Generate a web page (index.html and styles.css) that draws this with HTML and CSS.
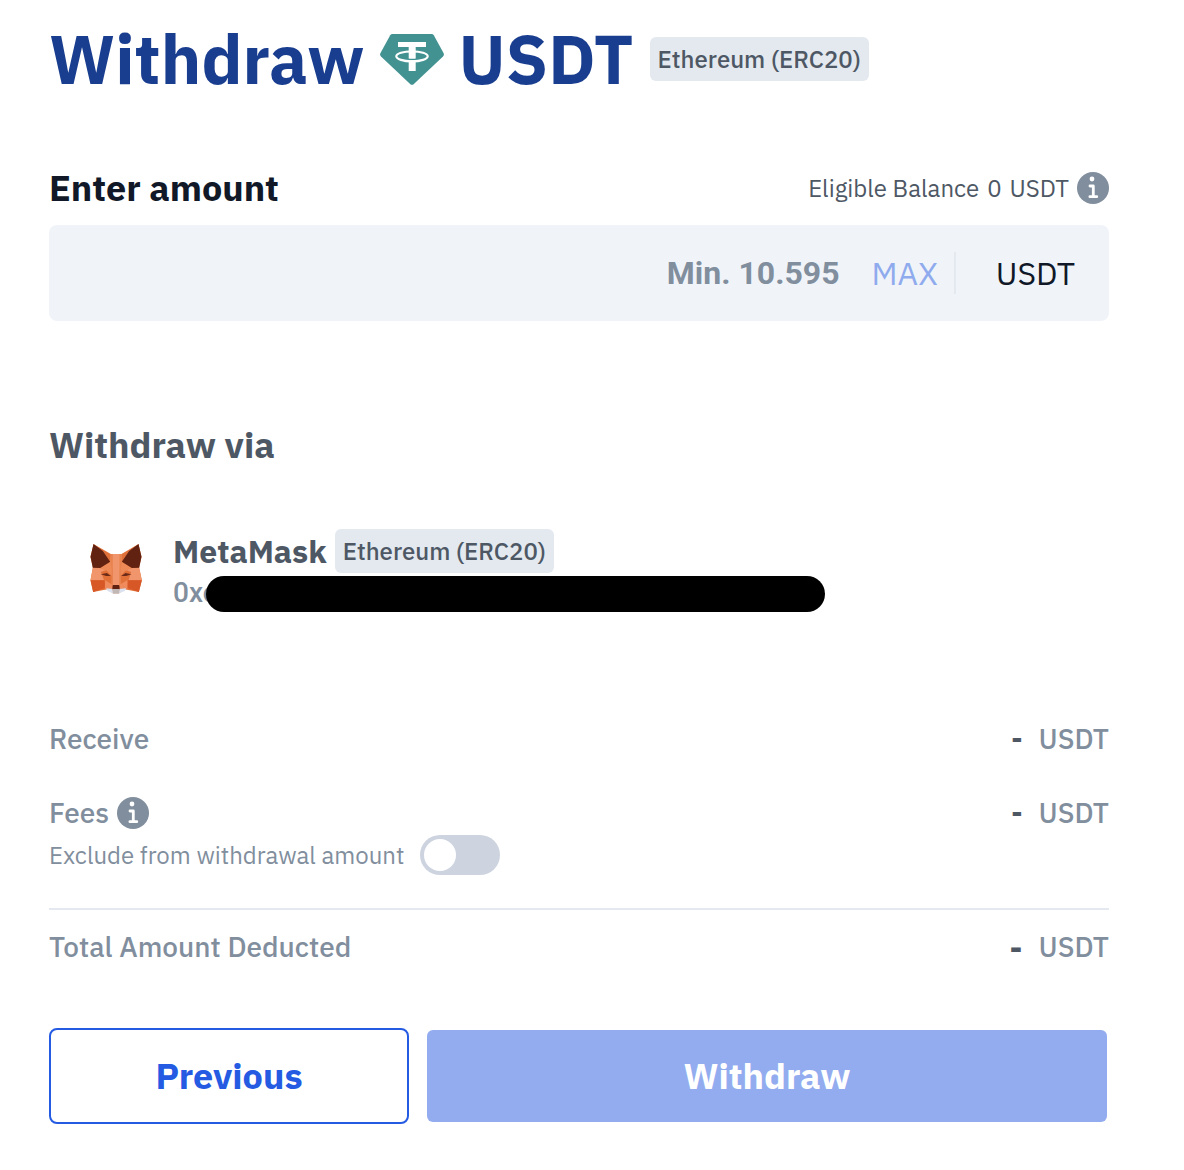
FILE: index.html
```html
<!DOCTYPE html>
<html lang="en">
<head>
<meta charset="utf-8">
<meta name="viewport" content="width=device-width, initial-scale=1">
<title>Withdraw USDT</title>
<link rel="stylesheet" href="styles.css">
</head>
<body>
<svg class="sprite" aria-hidden="true">
  <symbol id="info" viewBox="0 0 32 32">
    <circle cx="16" cy="16" r="16" fill="#818e9d"/>
    <circle cx="15" cy="7" r="2.4" fill="#fff"/>
    <path d="M13 14H16.3V24.7M12.9 24.7H19.8" fill="none" stroke="#fff" stroke-width="2.8" stroke-linecap="round" stroke-linejoin="round"/>
  </symbol>
</svg>
<main class="page">
  <header class="title-row">
    <h1 class="title">
      <span>Withdraw</span>
      <svg class="tether" viewBox="0 0 64 51" aria-hidden="true">
        <path d="M12.5 0H51.5Q53 0 53.8 1.2L63.5 19Q64.5 21 63 22.6L33.6 50.2Q32 51.5 30.4 50.2L1 22.6Q-.5 21 .5 19L10.2 1.2Q11 0 12.5 0Z" fill="#429292"/>
        <path d="M18 8H46V13H35.700V37H28.700V13H18Z" fill="#fff"/>
        <path d="M28 24.600Q32 25 36.500 24.600V26.200H28Z" fill="#429292"/>
        <ellipse cx="32" cy="22.300" rx="15.700" ry="5" fill="none" stroke="#fff" stroke-width="2.200"/>
      </svg>
      <span>USDT</span>
    </h1>
    <span class="tag">Ethereum (ERC20)</span>
  </header>

  <form class="form">
    <div class="amount-head">
      <label class="heading heading-dark" for="amount">Enter amount</label>
      <p class="balance"><span>Eligible Balance</span><span>0</span><span>USDT</span><svg class="info" role="img" aria-label="Balance information"><use href="#info"/></svg></p>
    </div>
    <div class="field">
      <input class="amount" id="amount" type="text" inputmode="decimal" placeholder="Min. 10.595">
      <button class="max" type="button">MAX</button>
      <span class="unit">USDT</span>
    </div>

    <h2 class="heading via">Withdraw via</h2>
    <section class="wallet">
      <svg class="fox" viewBox="30 42 155 150" aria-hidden="true">
        <path d="M40 42L92 72H124L175 42L184 80L177 113L185 151L176 186L133 178L117 190H98L82 178L39 186L31 151L38 113L31 80Z" fill="#e27139"/>
        <path d="M38 113L60 114L78 120L62 126L72 151H31ZM177 113L155 114L137 120L153 126L145 151H185Z" fill="#f0956c"/>
        <path d="M60 114L90 95L97 118L95 138L80 122ZM155 114L125 95L119 118L121 138L136 122Z" fill="#ee8a58"/>
        <path d="M92 72L90 95L97 118V165H119V118L125 95L124 72Z" fill="#f0956c"/>
        <path d="M92 72H98V165H93L95 118L90 95ZM118 72H124L126 95L121 118L123 165H118Z" fill="#e8834f"/>
        <path d="M40 42L68 63L90 95L60 114L38 113L31 80ZM175 42L147 63L125 95L155 114L177 113L184 80Z" fill="#622211"/>
        <path d="M31 151H73L75 174L39 186ZM185 151H144L141 174L176 186Z" fill="#d85727"/>
        <path d="M75 151L98 165L97 174L74 176ZM141 151L117 165L118 174L142 176Z" fill="#f08b5d"/>
        <path d="M62 133L80 129L92 138H78ZM154 133L136 129L123 138H138Z" fill="#6c2a18"/>
        <path d="M98 165H117L119 178H96Z" fill="#622211"/>
        <path d="M78 175L97 176L99 190L82 183ZM138 175L118 176L116 190L134 183Z" fill="#dbe1ef"/>
        <path d="M98 177H117V191H98Z" fill="#c1b8b5"/>
      </svg>
      <div class="wallet-info">
        <div class="wallet-name"><strong>MetaMask</strong><span class="tag">Ethereum (ERC20)</span></div>
        <div class="address">0xc<span class="mask"></span></div>
      </div>
    </section>

    <dl class="summary">
      <div class="line"><dt>Receive</dt><dd><b>-</b>USDT</dd></div>
      <div class="line"><dt>Fees<svg class="info" role="img" aria-label="Fee information"><use href="#info"/></svg></dt><dd><b>-</b>USDT</dd></div>
    </dl>
    <label class="exclude">Exclude from withdrawal amount<input class="switch" type="checkbox" role="switch"></label>
    <dl class="summary total">
      <div class="line"><dt>Total Amount Deducted</dt><dd><b>-</b>USDT</dd></div>
    </dl>
    <div class="actions">
      <button class="button previous" type="button">Previous</button>
      <button class="button withdraw" type="submit">Withdraw</button>
    </div>
  </form>
</main>
</body>
</html>
```
FILE: styles.css
```css
*, *::before, *::after { box-sizing: border-box; }
body {
  margin: 0;
  background: #fff;
  color: #4e5865;
  font-family: "IBM Plex Sans", Roboto, "Liberation Sans", sans-serif;
  font-size: 24px;
  line-height: 32px;
}
h1, h2, p, dl, dd { margin: 0; }
button, input { font: inherit; margin: 0; }
.sprite { position: absolute; width: 0; height: 0; }
.page { padding: 24px 75px 46px 49px; }

.title-row { display: flex; align-items: center; gap: 16px; }
.title {
  display: flex;
  align-items: center;
  gap: 15px;
  color: #193d8f;
  font-size: 68px;
  line-height: 70px;
  font-weight: 700;
}
.tether { width: 64px; height: 51px; }
.tag {
  padding: 6px 8px;
  border-radius: 6px;
  background: #e4e9f0;
  color: #4e5865;
  font-size: 24px;
  line-height: 32px;
  font-weight: 500;
  white-space: nowrap;
}

.amount-head {
  display: flex;
  justify-content: space-between;
  align-items: center;
  margin-top: 70px;
}
.heading { font-size: 36px; line-height: 48px; font-weight: 700; }
.heading-dark { color: #111827; }
.balance { display: flex; align-items: center; gap: 8px; }
.info { flex: none; width: 32px; height: 32px; }
.field {
  display: flex;
  align-items: center;
  height: 96px;
  margin-top: 13px;
  padding-right: 34px;
  border-radius: 8px;
  background: #f0f4f9;
  font-size: 32px;
}
.amount {
  flex: 1;
  min-width: 0;
  height: 96px;
  border: 0;
  background: none;
  color: #111827;
  font-family: Roboto, "Liberation Sans", sans-serif;
  font-weight: 700;
  text-align: right;
  padding: 0 32px;
}
.amount::placeholder { color: #818e9d; opacity: 1; }
.max { padding: 0; border: 0; background: none; color: #8fabee; }
.unit {
  margin-left: 16px;
  padding-left: 40px;
  border-left: 2px solid #e4e9f0;
  color: #111827;
  line-height: 42px;
}

.via { margin-top: 100px; }
.wallet { display: flex; align-items: center; gap: 31px; margin-top: 60px; padding-left: 41px; }
.fox { width: 52px; height: 50px; }
.wallet-info { flex: 1; }
.wallet-name { display: flex; align-items: center; gap: 8px; font-size: 32px; }
.address {
  position: relative;
  margin-top: 4px;
  color: #818e9d;
  font-family: Roboto, "Liberation Sans", sans-serif;
  font-size: 28px;
  line-height: 32px;
  font-weight: 500;
}
.mask {
  position: absolute;
  left: 33px;
  top: -1px;
  width: 619px;
  height: 36px;
  border-radius: 18px;
  background: #000;
}

.summary { display: grid; gap: 42px; margin-top: 114px; }
.line { display: flex; justify-content: space-between; color: #818e9d; font-size: 28px; font-weight: 500; }
.line dt { display: flex; gap: 8px; }
.line dd { display: flex; gap: 16px; }
.line b { color: #4e5865; }
.exclude { display: flex; align-items: center; gap: 16px; margin-top: 6px; color: #818e9d; }
.switch {
  appearance: none;
  width: 80px;
  height: 40px;
  padding: 4px;
  border-radius: 20px;
  background: #cdd4e0;
}
.switch::before { content: ""; display: block; width: 32px; height: 32px; border-radius: 50%; background: #fff; }
.switch:checked { background: #255be3; }
.switch:checked::before { margin-left: auto; }
.total { margin-top: 33px; padding-top: 21px; border-top: 2px solid #e4e9f0; }
.total b { font-size: 32px; }

.actions { display: grid; grid-template-columns: 1fr 1.9fr; gap: 16px; margin-top: 65px; }
.button {
  height: 96px;
  border: 2px solid transparent;
  border-radius: 8px;
  font-size: 36px;
  font-weight: 700;
}
.previous { border-color: #255be3; background: #fff; color: #255be3; }
.withdraw { background: #92acef; background-clip: padding-box; color: #fff; }
```
